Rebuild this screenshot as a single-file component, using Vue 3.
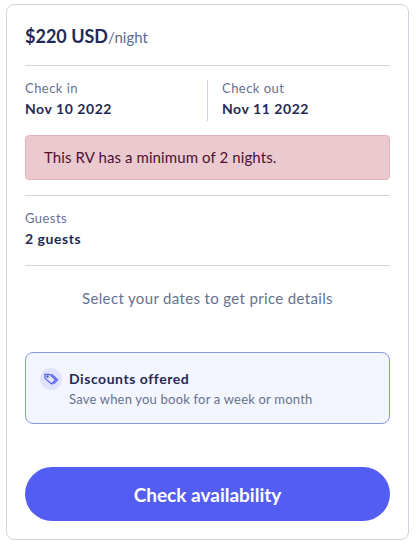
<script setup>
const dates = [
  { label: 'Check in', value: 'Nov 10 2022' },
  { label: 'Check out', value: 'Nov 11 2022' },
]
</script>

<template>
  <div class="page">
    <section class="card">
      <div class="price"><strong>$220 USD</strong><span>/night</span></div>
      <hr class="rule" />
      <div class="dates">
        <div v-for="d in dates" :key="d.label" class="date">
          <div class="label">{{ d.label }}</div>
          <div class="value">{{ d.value }}</div>
        </div>
      </div>
      <div class="alert">This RV has a minimum of 2 nights.</div>
      <hr class="rule rule-alert" />
      <div class="guests">
        <div class="label">Guests</div>
        <div class="value">2 guests</div>
      </div>
      <hr class="rule rule-guests" />
      <p class="hint">Select your dates to get price details</p>
      <div class="discount">
        <span class="tag">
          <svg width="16" height="16" viewBox="0 0 16 16" fill="none" stroke="#5460f0" stroke-width="1.2" stroke-linejoin="round" stroke-linecap="round">
            <path d="M1.8 3.4H6.6L12.6 8.8 8.6 13 2 7.4Z" />
            <path d="M8.8 3.4 14.6 8.8 11 12.6" />
            <circle cx="4.5" cy="5.6" r="0.7" />
          </svg>
        </span>
        <div class="discount-text">
          <div class="discount-title">Discounts offered</div>
          <div class="discount-sub">Save when you book for a week or month</div>
        </div>
      </div>
      <button class="cta" type="button">Check availability</button>
    </section>
  </div>
</template>

<style>
html, body { margin: 0; background: #fff; }
</style>

<style scoped>
.page {
  width: 416px;
  height: 548px;
  box-sizing: border-box;
  padding: 4px 7px 8px 6px;
  font-family: Lato, "Open Sans", sans-serif;
  color: #1f2a56;
}
.card {
  box-sizing: border-box;
  height: 536px;
  border: 1px solid #d0d4de;
  border-radius: 8px;
  padding: 18px;
  display: flex;
  flex-direction: column;
}
.price { height: 27px; line-height: 27px; display: flex; align-items: baseline; }
.price strong { font-size: 18px; font-weight: 700; }
.price span { font-size: 15px; color: #5f6a8a; }
.rule { width: 100%; margin: 0; border: 0; height: 1px; background: #d0d4de; flex: none; }
.price + .rule { margin-top: 15px; }
.dates { display: flex; margin-top: 14px; height: 41px; }
.date { flex: 0 0 182px; box-sizing: border-box; }
.date + .date { flex: 1; border-left: 1px solid #d0d4de; padding-left: 14px; }
.label { font-size: 13px; line-height: 17px; letter-spacing: 0.45px; color: #667190; }
.value { font-size: 14px; line-height: 20px; font-weight: 700; letter-spacing: 0.55px; margin-top: 2px; }
.alert {
  margin-top: 14px;
  height: 45px;
  box-sizing: border-box;
  background: #eacace;
  border: 1px solid #e0b6bd;
  border-radius: 4px;
  padding-left: 18px;
  font-size: 15px;
  letter-spacing: 0.1px;
  line-height: 43px;
  color: #4e1030;
}
.rule-alert { margin-top: 15px; }
.guests { margin-top: 14px; height: 40px; }
.rule-guests { margin-top: 15px; }
.hint { margin: 22px 0 0; font-size: 15px; letter-spacing: 0.35px; line-height: 20px; text-align: center; color: #667190; }
.discount {
  margin-top: 44px;
  height: 72px;
  box-sizing: border-box;
  background: #f3f6fe;
  border: 1px solid #8a97e6;
  border-radius: 8px;
  padding: 15px 14px;
  display: flex;
  gap: 7px;
}
.tag {
  width: 22px;
  height: 22px;
  border-radius: 50%;
  background: #dfe3fb;
  display: flex;
  align-items: center;
  justify-content: center;
  flex: none;
}
.discount-title { font-size: 14px; line-height: 22px; font-weight: 700; letter-spacing: 0.55px; }
.discount-sub { font-size: 13px; line-height: 18px; letter-spacing: 0.2px; color: #667190; }
.cta {
  margin-top: 43px;
  height: 54px;
  border: 0;
  border-radius: 27px;
  background: #535df2;
  color: #fff;
  font-family: inherit;
  font-size: 19px;
  font-weight: 700;
  padding: 0;
  width: 100%;
}
</style>
